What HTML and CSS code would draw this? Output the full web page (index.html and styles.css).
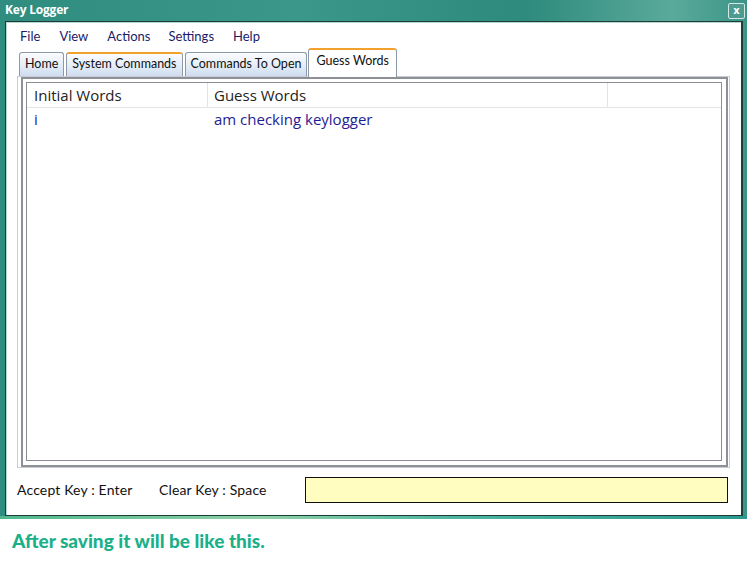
FILE: index.html
```html
<!DOCTYPE html>
<html>
<head>
<meta charset="utf-8">
<link rel="stylesheet" href="styles.css">
</head>
<body>
<div class="window">
  <div class="titlebar">
    <span class="title">Key Logger</span>
    <span class="close">x</span>
  </div>
  <div class="client">
    <nav class="menu">
      <span>File</span><span>View</span><span>Actions</span><span>Settings</span><span>Help</span>
    </nav>
    <div class="tabs">
      <span class="tab">Home</span>
      <span class="tab hot">System Commands</span>
      <span class="tab">Commands To Open</span>
      <span class="tab active">Guess Words</span>
    </div>
    <div class="panel">
      <div class="list">
        <div class="inner">
          <div class="row head">
            <div class="c1">Initial Words</div>
            <div class="c2">Guess Words</div>
            <div class="c3"></div>
          </div>
          <div class="row item">
            <div class="c1">i</div>
            <div class="c2">am checking keylogger</div>
            <div class="c3"></div>
          </div>
        </div>
      </div>
    </div>
    <div class="footer">
      <span class="k1">Accept Key : Enter</span>
      <span class="k2">Clear Key : Space</span>
      <div class="input"></div>
    </div>
  </div>
</div>
<p class="caption">After saving it will be like this.</p>
</body>
</html>
```
FILE: styles.css
```css
html, body { margin: 0; padding: 0; background: #fff; }
body { font-family: "Lato", "Open Sans", sans-serif; width: 747px; height: 572px; overflow: hidden; }

.window {
  width: 747px;
  height: 519px;
  box-sizing: border-box;
  padding: 0 4px 3px 5px;
  background: linear-gradient(90deg, #2f8d7f 0%, #3a978a 40%, #2d8a7c 70%, #5aaa9b 90%, #3b9587 100%);
  display: flex;
  flex-direction: column;
  position: relative;
}
.window::after {
  content: "";
  position: absolute;
  left: 0; right: 0; bottom: 0; height: 3px;
  background: linear-gradient(90deg, #4fb98e 0%, #8fd1a6 35%, #4fb6a0 60%, #2a9a90 100%);
}
.titlebar {
  height: 20px;
  display: flex;
  align-items: center;
  justify-content: space-between;
}
.title {
  color: #fff;
  font-family: "Open Sans", sans-serif;
  font-weight: 700;
  font-size: 12px;
  letter-spacing: -0.2px;
  margin-top: -1px;
}
.close {
  width: 15px;
  height: 14px;
  border: 1px solid #d6e8e4;
  border-radius: 2px;
  background: #4e9c90;
  color: #fff;
  font-family: "DejaVu Sans", sans-serif;
  font-weight: 700;
  font-size: 10px;
  line-height: 13px;
  text-align: center;
  margin-right: -2px;
  margin-top: 2px;
}
.client {
  flex: 1;
  margin-top: 1px;
  background: #fff;
  border: 1px solid #1d3d38;
  border-right: 2px solid #1d3d38;
  box-shadow: inset 1px 1px 0 #b8d6d0;
  display: flex;
  flex-direction: column;
  padding: 0 11px;
  position: relative;
  z-index: 1;
}
.menu {
  display: flex;
  height: 28px;
  align-items: center;
  padding-left: 3px;
  font-size: 13px;
  color: #1b1b6a;
}
.menu span { margin-right: 19px; }
.menu span:nth-child(3) { margin-right: 18px; }
.tabs {
  display: flex;
  align-items: flex-end;
  height: 26px;
  padding-left: 2px;
  font-size: 12.5px;
  color: #111;
  position: relative;
  z-index: 2;
}
.tab {
  height: 24px;
  box-sizing: border-box;
  padding: 3px 5px 0 5px;
  margin-right: 2px;
  border: 1px solid #8d99a8;
  border-bottom: 0;
  border-radius: 3px 3px 0 0;
  background: linear-gradient(#fbfcfe, #e4edf8 55%, #cfdcee);
  white-space: nowrap;
}
.tab.hot {
  border-top: 2px solid #f2a12c;
  padding-top: 2px;
}
.tab.active {
  height: 29px;
  margin-bottom: -1px;
  margin-left: -1px;
  background: #fff;
  border-top: 2px solid #f2a12c;
  padding: 3px 7px 0 7px;
}
.panel {
  height: 392px;
  box-sizing: border-box;
  border: 1px solid #c9ccd2;
  padding: 0 1px 0 3px;
  background: #fff;
}
.list {
  height: 100%;
  box-sizing: border-box;
  border: 2px solid #8e9097;
  padding: 3px 4px 4px 3px;
}
.inner {
  height: 100%;
  box-sizing: border-box;
  border: 1px solid #8a8c94;
}
.row { display: flex; font-family: "Open Sans", sans-serif; font-size: 15px; }
.row .c1 { width: 180px; box-sizing: border-box; padding-left: 7px; }
.row .c2 { width: 400px; box-sizing: border-box; padding-left: 6px; }
.row .c3 { flex: 1; }
.head {
  height: 24px;
  line-height: 24px;
  color: #222;
  border-bottom: 1px solid #e2e4e8;
}
.head .c2, .head .c3 { border-left: 1px solid #e2e4e8; }
.item {
  color: #1e1e92;
  height: 24px;
  line-height: 22px;
}
.item .c2 { padding-left: 7px; }
.footer {
  display: flex;
  align-items: center;
  flex: 1;
  padding-bottom: 4px;
  font-size: 14px;
  letter-spacing: 0.15px;
  color: #111;
}
.k1 { width: 142px; }
.k2 { width: 146px; }
.input {
  flex: 1;
  height: 26px;
  box-sizing: border-box;
  border: 1px solid #111;
  background: #fffec0;
  margin-right: 2px;
}
.caption {
  margin: 10px 0 0 12px;
  font-family: "Lato", sans-serif;
  font-weight: 900;
  font-size: 19px;
  line-height: 23px;
  color: #1ab08a;
}
```
